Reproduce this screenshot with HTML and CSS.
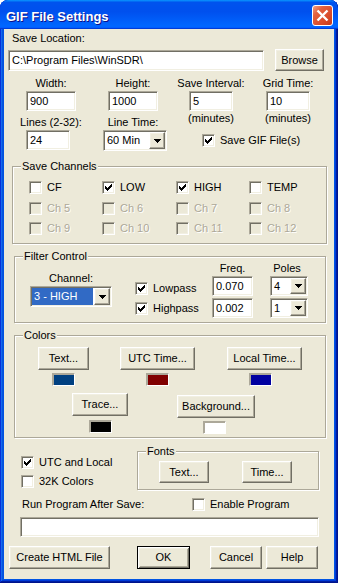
FILE: index.html
```html
<!DOCTYPE html>
<html lang="en">
  <head>
    <meta charset="UTF-8" />
    <title>GIF File Settings</title>
    <link rel="stylesheet" href="styles.css">
  </head>
  <body>
    <div class="window">
      <div class="titlebar">
        <span class="title">GIF File Settings</span>
        <span class="close">
          <svg width="19" height="19" viewBox="0 0 19 19"><path d="M4.5 4.5L14.5 14.5M14.5 4.5L4.5 14.5" stroke="#fff" stroke-width="2.4"/></svg>
        </span>
      </div>

      <div class="client">
        <div class="save-label">Save Location:</div>
        <div class="path-row">
          <div class="field path">C:\Program Files\WinSDR\</div>
          <button class="btn browse">Browse</button>
        </div>

        <div class="params">
          <div class="cap">Width:</div>
          <div class="cap">Height:</div>
          <div class="cap">Save Interval:</div>
          <div class="cap">Grid Time:</div>
          <div class="field w50">900</div>
          <div class="field w50">1000</div>
          <div class="field w44">5</div>
          <div class="field w44">10</div>
          <div class="cap low">Lines (2-32):</div>
          <div class="cap low">Line Time:</div>
          <div class="cap">(minutes)</div>
          <div class="cap">(minutes)</div>
          <div class="field w44 lines">24</div>
          <div class="combo linetime">
            <span class="val">60 Min</span>
            <span class="arrow"><svg width="7" height="4" viewBox="0 0 7 4"><path d="M0 0h7v1h-1v1h-1v1h-1v1h-1v-1h-1v-1h-1v-1h-1z"/></svg></span>
          </div>
          <label class="chk gif">
            <span class="box"><svg width="7" height="7" viewBox="0 0 7 7" shape-rendering="crispEdges"><path d="M6 0h1v1h-1zM5 1h2v1h-2zM0 2h1v1h-1zM4 2h3v1h-3zM0 3h2v1h-2zM3 3h3v1h-3zM0 4h5v1h-5zM1 5h3v1h-3zM2 6h1v1h-1z"/></svg></span>
            Save GIF File(s)
          </label>
        </div>

        <div class="group channels">
          <span class="legend">Save Channels</span>
          <div class="chan-grid">
            <label class="chk"><span class="box"></span>CF</label>
            <label class="chk"><span class="box"><svg width="7" height="7" viewBox="0 0 7 7" shape-rendering="crispEdges"><path d="M6 0h1v1h-1zM5 1h2v1h-2zM0 2h1v1h-1zM4 2h3v1h-3zM0 3h2v1h-2zM3 3h3v1h-3zM0 4h5v1h-5zM1 5h3v1h-3zM2 6h1v1h-1z"/></svg></span>LOW</label>
            <label class="chk"><span class="box"><svg width="7" height="7" viewBox="0 0 7 7" shape-rendering="crispEdges"><path d="M6 0h1v1h-1zM5 1h2v1h-2zM0 2h1v1h-1zM4 2h3v1h-3zM0 3h2v1h-2zM3 3h3v1h-3zM0 4h5v1h-5zM1 5h3v1h-3zM2 6h1v1h-1z"/></svg></span>HIGH</label>
            <label class="chk"><span class="box"></span>TEMP</label>
            <label class="chk off"><span class="box"></span>Ch 5</label>
            <label class="chk off"><span class="box"></span>Ch 6</label>
            <label class="chk off"><span class="box"></span>Ch 7</label>
            <label class="chk off"><span class="box"></span>Ch 8</label>
            <label class="chk off"><span class="box"></span>Ch 9</label>
            <label class="chk off"><span class="box"></span>Ch 10</label>
            <label class="chk off"><span class="box"></span>Ch 11</label>
            <label class="chk off"><span class="box"></span>Ch 12</label>
          </div>
        </div>

        <div class="group filter">
          <span class="legend">Filter Control</span>
          <div class="chan-col">
            <div class="cap">Channel:</div>
            <div class="combo sel">
              <span class="val">3 - HIGH</span>
              <span class="arrow"><svg width="7" height="4" viewBox="0 0 7 4"><path d="M0 0h7v1h-1v1h-1v1h-1v1h-1v-1h-1v-1h-1v-1h-1z"/></svg></span>
            </div>
          </div>
          <div class="pass-col">
            <label class="chk"><span class="box"><svg width="7" height="7" viewBox="0 0 7 7" shape-rendering="crispEdges"><path d="M6 0h1v1h-1zM5 1h2v1h-2zM0 2h1v1h-1zM4 2h3v1h-3zM0 3h2v1h-2zM3 3h3v1h-3zM0 4h5v1h-5zM1 5h3v1h-3zM2 6h1v1h-1z"/></svg></span>Lowpass</label>
            <label class="chk"><span class="box"><svg width="7" height="7" viewBox="0 0 7 7" shape-rendering="crispEdges"><path d="M6 0h1v1h-1zM5 1h2v1h-2zM0 2h1v1h-1zM4 2h3v1h-3zM0 3h2v1h-2zM3 3h3v1h-3zM0 4h5v1h-5zM1 5h3v1h-3zM2 6h1v1h-1z"/></svg></span>Highpass</label>
          </div>
          <div class="freq-col">
            <div class="cap">Freq.</div>
            <div class="field">0.070</div>
            <div class="field">0.002</div>
          </div>
          <div class="poles-col">
            <div class="cap">Poles</div>
            <div class="combo">
              <span class="val">4</span>
              <span class="arrow"><svg width="7" height="4" viewBox="0 0 7 4"><path d="M0 0h7v1h-1v1h-1v1h-1v1h-1v-1h-1v-1h-1v-1h-1z"/></svg></span>
            </div>
            <div class="combo">
              <span class="val">1</span>
              <span class="arrow"><svg width="7" height="4" viewBox="0 0 7 4"><path d="M0 0h7v1h-1v1h-1v1h-1v1h-1v-1h-1v-1h-1v-1h-1z"/></svg></span>
            </div>
          </div>
        </div>

        <div class="group colors">
          <span class="legend">Colors</span>
          <div class="color-row top">
            <div class="pick p-text">
              <button class="btn">Text...</button>
              <span class="swatch sw-text"></span>
            </div>
            <div class="pick p-utc">
              <button class="btn">UTC Time...</button>
              <span class="swatch sw-utc"></span>
            </div>
            <div class="pick p-local">
              <button class="btn">Local Time...</button>
              <span class="swatch sw-local"></span>
            </div>
          </div>
          <div class="color-row bottom">
            <div class="pick p-trace">
              <button class="btn">Trace...</button>
              <span class="swatch sw-trace"></span>
            </div>
            <div class="pick p-bg">
              <button class="btn">Background...</button>
              <span class="swatch sw-bg"></span>
            </div>
          </div>
        </div>

        <div class="misc-row">
          <div class="misc-checks">
            <label class="chk"><span class="box"><svg width="7" height="7" viewBox="0 0 7 7" shape-rendering="crispEdges"><path d="M6 0h1v1h-1zM5 1h2v1h-2zM0 2h1v1h-1zM4 2h3v1h-3zM0 3h2v1h-2zM3 3h3v1h-3zM0 4h5v1h-5zM1 5h3v1h-3zM2 6h1v1h-1z"/></svg></span>UTC and Local</label>
            <label class="chk"><span class="box"></span>32K Colors</label>
          </div>
          <div class="group fonts">
            <span class="legend">Fonts</span>
            <button class="btn f-text">Text...</button>
            <button class="btn f-time">Time...</button>
          </div>
        </div>

        <div class="run-row">
          <span class="run-label">Run Program After Save:</span>
          <label class="chk"><span class="box"></span>Enable Program</label>
        </div>
        <div class="field program"></div>

        <div class="buttons">
          <button class="btn b-html">Create HTML File</button>
          <button class="btn default b-ok">OK</button>
          <button class="btn b-cancel">Cancel</button>
          <button class="btn b-help">Help</button>
        </div>
      </div>
    </div>
  </body>
</html>
```

FILE: styles.css
```css
body {
  margin: 0;
  background: #fff;
  font-family: "Liberation Sans", Arial, sans-serif;
  font-size: 11px;
  line-height: 13px;
  color: #000;
}

/* window frame */
.window {
  width: 338px;
  height: 583px;
  box-sizing: border-box;
  padding: 0 4px 4px;
  background: #0054e3;
  border-radius: 8px 8px 0 0;
  overflow: hidden;
  box-shadow: inset -1px -1px #00138c, inset 1px 1px #0831d9, inset -2px -2px #001ea0, inset 2px 2px #166aee, inset -3px -3px #003bda, inset 3px 3px #0855dd;
}
.titlebar {
  height: 29px;
  margin: 0 -4px;
  padding: 0 5px 0 6px;
  display: flex;
  align-items: center;
  justify-content: space-between;
  border-radius: 8px 8px 0 0;
  background: linear-gradient(180deg, #0997ff, #0053ee 8%, #0050ee 40%, #06f 88%, #06f 93%, #005bff 95%, #003dd7 96%, #003dd7);
}
.title {
  margin-top: 3px;
  color: #fff;
  font-size: 13px;
  font-weight: bold;
  text-shadow: 1px 1px #0f1089;
}
.close {
  width: 21px;
  height: 21px;
  margin-top: 2px;
  box-sizing: border-box;
  display: flex;
  border: 1px solid #fff;
  border-radius: 3px;
  background: linear-gradient(135deg, #f2a085 0%, #e3613f 28%, #d84a2a 70%, #c23a1c 100%);
}
.client {
  height: 550px;
  box-sizing: border-box;
  padding-top: 3px;
  background: #ece9d8;
}

/* classic controls */
.field {
  box-sizing: border-box;
  height: 20px;
  padding: 0 3px;
  display: flex;
  align-items: center;
  white-space: nowrap;
  background: #fff;
  border: 1px solid;
  border-color: #aca899 #fff #fff #aca899;
  box-shadow: inset 1px 1px #716f64, inset -1px -1px #f1efe2;
}
.btn {
  box-sizing: border-box;
  height: 23px;
  padding: 0;
  display: flex;
  align-items: center;
  justify-content: center;
  font: inherit;
  color: #000;
  white-space: nowrap;
  background: #ece9d8;
  border: 1px solid;
  border-color: #fff #716f64 #716f64 #fff;
  box-shadow: inset -1px -1px #aca899, inset 1px 1px #f1efe2;
}
.btn.default {
  border: 1px solid #000;
  box-shadow: inset 1px 1px #fff, inset -1px -1px #716f64, inset 2px 2px #f1efe2, inset -2px -2px #aca899;
}
.chk {
  display: flex;
  align-items: center;
  gap: 5px;
  white-space: nowrap;
}
.box {
  width: 13px;
  height: 13px;
  flex: none;
  box-sizing: border-box;
  padding: 2px;
  background: #fff;
  border: 1px solid;
  border-color: #aca899 #fff #fff #aca899;
  box-shadow: inset 1px 1px #716f64, inset -1px -1px #f1efe2;
}
.box svg {
  display: block;
}
.chk.off {
  color: #aca899;
  text-shadow: 1px 1px #fff;
}
.chk.off .box {
  background: #ece9d8;
}
.combo {
  box-sizing: border-box;
  height: 21px;
  padding: 1px;
  display: flex;
  background: #fff;
  border: 1px solid;
  border-color: #aca899 #fff #fff #aca899;
  box-shadow: inset 1px 1px #716f64, inset -1px -1px #f1efe2;
}
.combo .val {
  flex: 1;
  display: flex;
  align-items: center;
  padding-left: 2px;
}
.combo.sel .val {
  margin-right: 1px;
  background: #316ac5;
  color: #fff;
}
.combo .arrow {
  width: 16px;
  box-sizing: border-box;
  display: flex;
  align-items: center;
  justify-content: center;
  background: #ece9d8;
  border: 1px solid;
  border-color: #fff #716f64 #716f64 #fff;
  box-shadow: inset -1px -1px #aca899, inset 1px 1px #f1efe2;
}
.group {
  position: relative;
  box-sizing: border-box;
  border: 1px solid #aca899;
  box-shadow: inset 1px 1px #fff, 1px 1px #fff;
}
.legend {
  position: absolute;
  top: -7px;
  left: 8px;
  padding: 0 1px;
  background: #ece9d8;
}

/* save location */
.save-label {
  padding-left: 8px;
}
.path-row {
  height: 22px;
  margin-top: 4px;
  display: flex;
  align-items: flex-start;
}
.path {
  width: 256px;
  height: 21px;
  margin: 1px 0 0 4px;
}
.browse {
  width: 49px;
  height: 22px;
  margin-left: 11px;
}

/* size / time grid */
.params {
  margin-top: 6px;
  display: grid;
  grid-template-columns: 94px 70px 86px 68px;
  grid-template-rows: 13px 20px 17px 21px;
  row-gap: 1px;
  justify-items: center;
}
.params .w50 {
  width: 50px;
}
.params .w44 {
  width: 44px;
}
.params .low {
  align-self: end;
}
.params .lines {
  justify-self: start;
  margin-left: 22px;
}
.params .linetime {
  width: 64px;
  margin-left: 4px;
}
.params .gif {
  grid-column: span 2;
  justify-self: start;
  align-self: center;
  margin-left: 34px;
}

/* save channels */
.channels {
  width: 315px;
  height: 78px;
  margin: 15px 0 0 8px;
}
.chan-grid {
  padding: 14px 0 0 16px;
  display: grid;
  grid-template-columns: 73px 74px 73px auto;
  grid-auto-rows: 13px;
  row-gap: 7.5px;
}

/* filter control */
.filter {
  width: 312px;
  height: 67px;
  margin: 12px 0 0 10px;
  display: flex;
  align-items: flex-start;
}
.chan-col {
  width: 82px;
  margin: 15px 0 0 15px;
  display: flex;
  flex-direction: column;
  gap: 1px;
}
.chan-col .cap {
  text-align: center;
}
.pass-col {
  width: 77px;
  margin: 25px 0 0 23px;
  display: flex;
  flex-direction: column;
  gap: 7px;
}
.freq-col,
.poles-col {
  margin-top: 5px;
  display: flex;
  flex-direction: column;
  gap: 2px;
}
.freq-col {
  width: 41px;
}
.poles-col {
  width: 38px;
  margin-left: 17px;
}
.freq-col .cap,
.poles-col .cap {
  margin-bottom: -1px;
  text-align: center;
}
.poles-col .cap {
  padding-right: 4px;
}
.poles-col .combo {
  height: 20px;
}

/* colors */
.colors {
  width: 312px;
  height: 103px;
  margin: 12px 0 0 10px;
}
.color-row {
  display: flex;
  align-items: flex-start;
}
.color-row.top {
  padding-top: 11px;
}
.color-row.bottom {
  margin-top: 7px;
}
.pick {
  display: flex;
  flex-direction: column;
  align-items: center;
  gap: 3px;
}
.pick .btn {
  width: 100%;
}
.swatch {
  width: 23px;
  height: 13px;
  box-sizing: border-box;
  border: 1px solid;
  border-color: #aca899 #fff #fff #aca899;
  box-shadow: inset 1px 1px #aca899;
}
.p-text {
  width: 51px;
  margin-left: 23px;
}
.p-utc {
  width: 75px;
  margin-left: 31px;
}
.p-local {
  width: 75px;
  margin-left: 32px;
}
.p-local .swatch {
  margin-right: 8px;
}
.p-trace {
  width: 56px;
  margin-left: 57px;
  gap: 4px;
}
.p-bg {
  width: 78px;
  margin: 2px 0 0 49px;
}
.p-bg .swatch {
  margin-right: 3px;
}
.sw-text {
  background: #004080;
}
.sw-utc {
  background: #800000;
}
.sw-local {
  background: #0000a0;
}
.sw-trace {
  background: #000;
}
.sw-bg {
  background: #fff;
}

/* fonts and options */
.misc-row {
  margin-top: 13px;
  display: flex;
  align-items: flex-start;
}
.misc-checks {
  width: 116px;
  margin-left: 17px;
  padding-top: 5px;
  display: flex;
  flex-direction: column;
  gap: 6px;
}
.fonts {
  width: 182px;
  height: 39px;
  padding-top: 9px;
  display: flex;
  align-items: flex-start;
}
.fonts .btn {
  width: 50px;
  height: 22px;
}
.f-text {
  margin-left: 21px;
}
.f-time {
  margin-left: 33px;
}
.run-row {
  height: 13px;
  margin-top: 8px;
  display: flex;
  align-items: center;
}
.run-label {
  width: 170px;
  padding-left: 18px;
}
.program {
  width: 299px;
  margin: 6px 0 0 16px;
}

/* dialog buttons */
.buttons {
  margin-top: 9px;
  display: flex;
}
.b-html {
  width: 101px;
  margin-left: 5px;
}
.b-ok {
  width: 53px;
  margin-left: 27px;
}
.b-cancel {
  width: 52px;
  margin-left: 20px;
}
.b-help {
  width: 52px;
  margin-left: 4px;
}
```
